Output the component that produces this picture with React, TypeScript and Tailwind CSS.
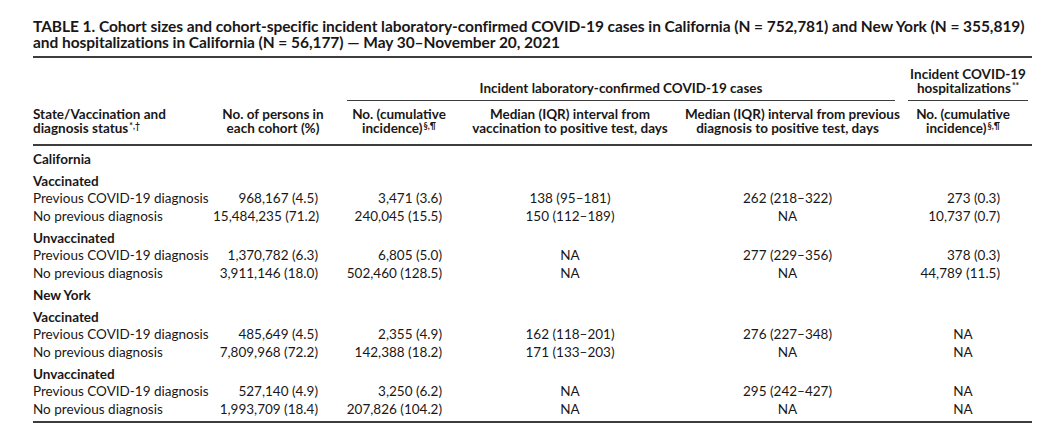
const font = { fontFamily: '"Lato", "Liberation Sans", sans-serif' };

type Row =
  | { kind: "state"; label: string }
  | { kind: "group"; label: string }
  | { kind: "data"; label: string; cells: string[] };

const rows: Row[] = [
  { kind: "state", label: "California" },
  { kind: "group", label: "Vaccinated" },
  { kind: "data", label: "Previous COVID-19 diagnosis", cells: ["968,167 (4.5)", "3,471 (3.6)", "138 (95–181)", "262 (218–322)", "273 (0.3)"] },
  { kind: "data", label: "No previous diagnosis", cells: ["15,484,235 (71.2)", "240,045 (15.5)", "150 (112–189)", "NA", "10,737 (0.7)"] },
  { kind: "group", label: "Unvaccinated" },
  { kind: "data", label: "Previous COVID-19 diagnosis", cells: ["1,370,782 (6.3)", "6,805 (5.0)", "NA", "277 (229–356)", "378 (0.3)"] },
  { kind: "data", label: "No previous diagnosis", cells: ["3,911,146 (18.0)", "502,460 (128.5)", "NA", "NA", "44,789 (11.5)"] },
  { kind: "state", label: "New York" },
  { kind: "group", label: "Vaccinated" },
  { kind: "data", label: "Previous COVID-19 diagnosis", cells: ["485,649 (4.5)", "2,355 (4.9)", "162 (118–201)", "276 (227–348)", "NA"] },
  { kind: "data", label: "No previous diagnosis", cells: ["7,809,968 (72.2)", "142,388 (18.2)", "171 (133–203)", "NA", "NA"] },
  { kind: "group", label: "Unvaccinated" },
  { kind: "data", label: "Previous COVID-19 diagnosis", cells: ["527,140 (4.9)", "3,250 (6.2)", "NA", "295 (242–427)", "NA"] },
  { kind: "data", label: "No previous diagnosis", cells: ["1,993,709 (18.4)", "207,826 (104.2)", "NA", "NA", "NA"] },
];

const Sup = ({ children }: { children: React.ReactNode }) => (
  <span className="relative -top-[4px] ml-[1px] text-[8.5px] font-bold leading-[0]">{children}</span>
);

export default function App() {
  return (
    <div className="min-h-screen bg-white text-[#1a1718]" style={font}>
      <div className="w-[999px] ml-[33px] pt-[18px]">
        {/* Title */}
        <h1 className="text-[15.5px] font-bold leading-[16px] tracking-[-0.05px] whitespace-nowrap pb-[6px]">
          TABLE 1. Cohort sizes and cohort-specific incident laboratory-confirmed COVID-19 cases in California (N = 752,781) and New York (N = 355,819)
          <br />
          and hospitalizations in California (N = 56,177) — May 30–November 20, 2021
        </h1>

        <table className="w-[999px] table-fixed border-collapse text-[13.5px]">
          <colgroup>
            <col className="w-[180px]" />
            <col className="w-[130px]" />
            <col className="w-[112px]" />
            <col className="w-[230px]" />
            <col className="w-[215px]" />
            <col className="w-[132px]" />
          </colgroup>
          <thead className="font-bold">
            <tr className="border-t-2 border-[#3d3d3d]">
              <th colSpan={2}></th>
              <th colSpan={3} className="align-bottom pt-[9px]">
                <div className="ml-[4px] mr-[5px] border-b-[1.5px] border-[#3d3d3d] pb-[5px] leading-[14px] text-center whitespace-nowrap">
                  Incident laboratory-confirmed COVID-19 cases
                </div>
              </th>
              <th className="align-bottom pt-[9px]">
                <div className="ml-[8px] mr-[4px] border-b-[1.5px] border-[#3d3d3d] pb-[5px] leading-[14px] text-center whitespace-nowrap">
                  Incident COVID-19
                  <br />
                  hospitalizations<Sup>**</Sup>
                </div>
              </th>
            </tr>
            <tr className="border-b-2 border-[#3d3d3d] leading-[13.5px] align-top whitespace-nowrap">
              <th className="text-left pt-[7px] pb-[9px]">
                State/Vaccination and
                <br />
                diagnosis status<Sup>*,†</Sup>
              </th>
              <th className="text-center pr-[10px] pt-[7px]">
                No. of persons in
                <br />
                each cohort (%)
              </th>
              <th className="text-center pt-[7px]">
                No. (cumulative
                <br />
                incidence)<Sup>§,¶</Sup>
              </th>
              <th className="text-center pt-[7px]">
                Median (IQR) interval from
                <br />
                vaccination to positive test, days
              </th>
              <th className="text-center pr-[10px] pt-[7px]">
                Median (IQR) interval from previous
                <br />
                diagnosis to positive test, days
              </th>
              <th className="text-center pr-[6px] pt-[7px]">
                No. (cumulative
                <br />
                incidence)<Sup>§,¶</Sup>
              </th>
            </tr>
          </thead>
          <tbody className="border-b-2 border-[#3d3d3d]">
            {rows.map((r, i) => {
              const last = i === rows.length - 1;
              if (r.kind !== "data") {
                return (
                  <tr key={i}>
                    <td colSpan={6} className="font-bold leading-[18px] pt-[4px]">
                      {r.label}
                    </td>
                  </tr>
                );
              }
              const pb = last ? "pb-[3px]" : "";
              return (
                <tr key={i} className="leading-[17.5px] whitespace-nowrap">
                  <td className={pb}>{r.label}</td>
                  <td className={`text-right pr-[25px] ${pb}`}>{r.cells[0]}</td>
                  <td className={`text-right pr-[13px] ${pb}`}>{r.cells[1]}</td>
                  <td className={`text-center ${pb}`}>{r.cells[2]}</td>
                  <td className={`text-center pr-[10px] ${pb}`}>{r.cells[3]}</td>
                  <td className={`${r.cells[4] === "NA" ? "text-center pr-[6px]" : "text-right pr-[32px]"} ${pb}`}>
                    {r.cells[4]}
                  </td>
                </tr>
              );
            })}
          </tbody>
        </table>
      </div>
    </div>
  );
}
